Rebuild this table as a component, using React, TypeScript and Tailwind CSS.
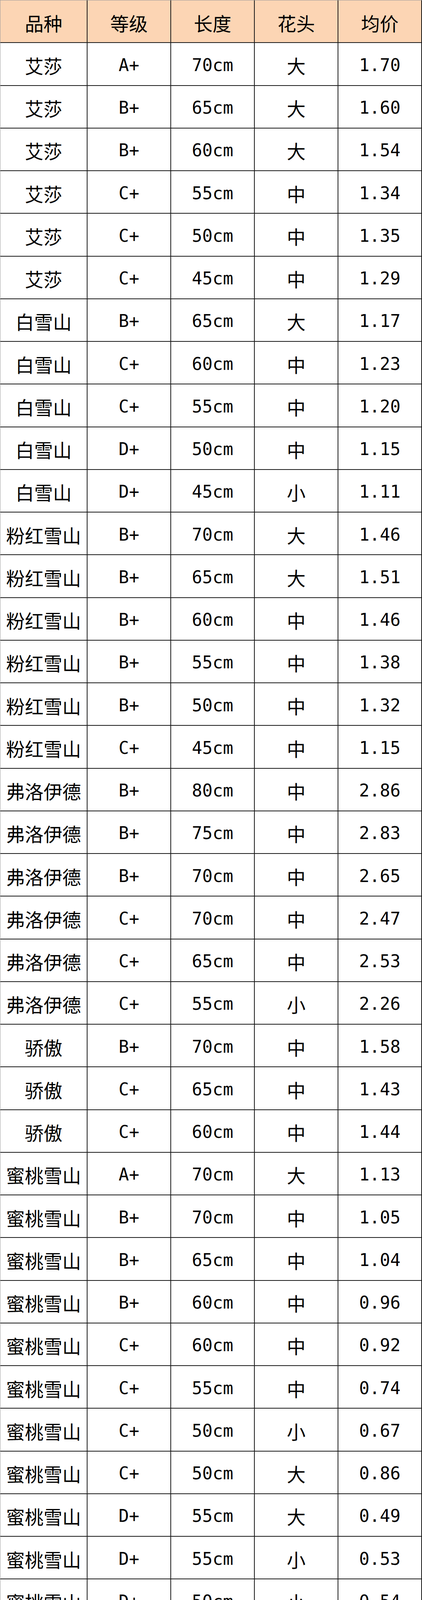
import React from "react"

type Row = [string, string, string, string, string]

const rows: Row[] = [
  ["艾莎", "A+", "70cm", "大", "1.70"],
  ["艾莎", "B+", "65cm", "大", "1.60"],
  ["艾莎", "B+", "60cm", "大", "1.54"],
  ["艾莎", "C+", "55cm", "中", "1.34"],
  ["艾莎", "C+", "50cm", "中", "1.35"],
  ["艾莎", "C+", "45cm", "中", "1.29"],
  ["白雪山", "B+", "65cm", "大", "1.17"],
  ["白雪山", "C+", "60cm", "中", "1.23"],
  ["白雪山", "C+", "55cm", "中", "1.20"],
  ["白雪山", "D+", "50cm", "中", "1.15"],
  ["白雪山", "D+", "45cm", "小", "1.11"],
  ["粉红雪山", "B+", "70cm", "大", "1.46"],
  ["粉红雪山", "B+", "65cm", "大", "1.51"],
  ["粉红雪山", "B+", "60cm", "中", "1.46"],
  ["粉红雪山", "B+", "55cm", "中", "1.38"],
  ["粉红雪山", "B+", "50cm", "中", "1.32"],
  ["粉红雪山", "C+", "45cm", "中", "1.15"],
  ["弗洛伊德", "B+", "80cm", "中", "2.86"],
  ["弗洛伊德", "B+", "75cm", "中", "2.83"],
  ["弗洛伊德", "B+", "70cm", "中", "2.65"],
  ["弗洛伊德", "C+", "70cm", "中", "2.47"],
  ["弗洛伊德", "C+", "65cm", "中", "2.53"],
  ["弗洛伊德", "C+", "55cm", "小", "2.26"],
  ["骄傲", "B+", "70cm", "中", "1.58"],
  ["骄傲", "C+", "65cm", "中", "1.43"],
  ["骄傲", "C+", "60cm", "中", "1.44"],
  ["蜜桃雪山", "A+", "70cm", "大", "1.13"],
  ["蜜桃雪山", "B+", "70cm", "中", "1.05"],
  ["蜜桃雪山", "B+", "65cm", "中", "1.04"],
  ["蜜桃雪山", "B+", "60cm", "中", "0.96"],
  ["蜜桃雪山", "C+", "60cm", "中", "0.92"],
  ["蜜桃雪山", "C+", "55cm", "中", "0.74"],
  ["蜜桃雪山", "C+", "50cm", "小", "0.67"],
  ["蜜桃雪山", "C+", "50cm", "大", "0.86"],
  ["蜜桃雪山", "D+", "55cm", "大", "0.49"],
  ["蜜桃雪山", "D+", "55cm", "小", "0.53"],
  ["蜜桃雪山", "D+", "50cm", "小", "0.54"],
  ["蜜桃雪山", "D+", "45cm", "小", "0.55"],
  ["蜜桃雪山", "D+", "45cm", "大", "0.52"],
  ["蜜桃雪山", "D+", "40cm", "中", "0.51"],
  ["蜜桃雪山", "D+", "40cm", "小", "0.53"],
  ["紫霞仙子", "B+", "65cm", "中", "1.59"],
  ["紫霞仙子", "C+", "60cm", "中", "1.53"],
  ["紫霞仙子", "C+", "55cm", "中", "1.44"],
  ["紫霞仙子", "C+", "45cm", "中", "1.48"],
]

const headers = ["品种", "等级", "长度", "花头", "均价"]

const rowClass = "grid grid-cols-[223px_214px_214px_214px_214px] h-[109.25px] shrink-0"
const cellBase = "flex items-center justify-center border-r-2 border-b-2 border-[#1a1a1a] text-black leading-none overflow-hidden"
const cjk = "font-['Noto_Sans_CJK_SC',sans-serif] text-[48px] pt-[6px]"
const latin = "font-['DejaVu_Sans_Mono','Noto_Sans_CJK_SC',monospace] text-[44px] pt-[6px]"

export default function App() {
  return (
    <div className="w-[1080px] h-[5028px] overflow-hidden bg-white border-l border-t border-[#9a9a9a] flex flex-col">
      <div className={rowClass}>
        {headers.map((h) => (
          <div key={h} className={`${cellBase} ${cjk} bg-[#fcd5b4]`}>
            {h}
          </div>
        ))}
      </div>

      {rows.map((r, i) => (
        <div key={i} className={rowClass}>
          <div className={`${cellBase} ${cjk}`}>{r[0]}</div>
          <div className={`${cellBase} ${latin}`}>{r[1]}</div>
          <div className={`${cellBase} ${latin}`}>{r[2]}</div>
          <div className={`${cellBase} ${cjk}`}>{r[3]}</div>
          <div className={`${cellBase} ${latin}`}>{r[4]}</div>
        </div>
      ))}
    </div>
  )
}
